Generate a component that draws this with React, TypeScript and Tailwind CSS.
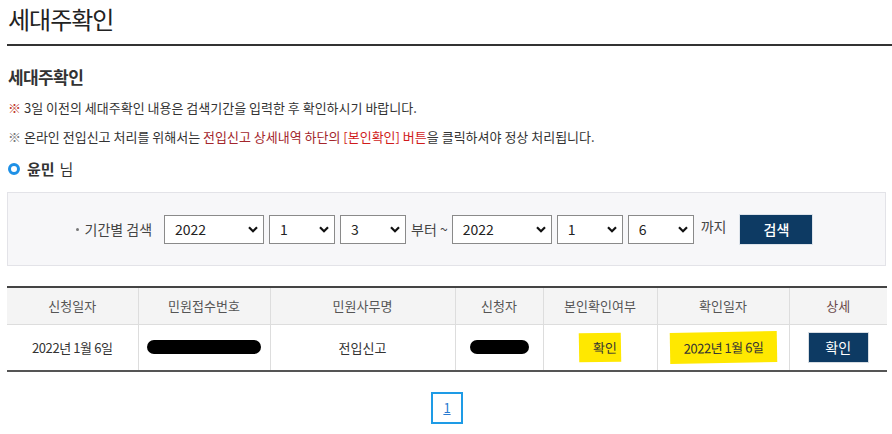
import React from "react";

const font = { fontFamily: '"Malgun Gothic", "Noto Sans CJK KR", "Noto Sans", sans-serif' };

function Select({ value, width }: { value: string; width: string }) {
  return (
    <div className={`relative h-[29px] ${width}`}>
      <select
        defaultValue={value}
        className="h-full w-full appearance-none border border-[#8a8a8a] bg-white pl-[10px] text-[14px] text-[#222] outline-none"
        style={font}
      >
        <option value={value}>{value}</option>
      </select>
      <svg
        className="pointer-events-none absolute right-[6px] top-[11px]"
        width="10"
        height="7"
        viewBox="0 0 10 7"
      >
        <path d="M1 1.2 L5 5.2 L9 1.2" fill="none" stroke="#111" strokeWidth="2.2" />
      </svg>
    </div>
  );
}

export default function App() {
  return (
    <div className="w-[892px] bg-white pl-[7px] text-[#333]" style={font}>
      <div className="h-[44px] pl-[1px] pt-[2px] text-[24px] leading-[34px] tracking-[-1px] text-[#222]">
        세대주확인
      </div>
      <div className="h-[2px] bg-[#333]" />
      <div className="mt-[19px] pl-[1px] text-[17px] font-bold leading-[24px] tracking-[-0.6px] text-[#333]">
        세대주확인
      </div>
      <div className="mt-[9px] pl-[1px] text-[13px] leading-[20px] text-[#333]">
        <span className="text-[#c0392b]">※</span> 3일 이전의 세대주확인 내용은 검색기간을 입력한 후 확인하시기 바랍니다.
      </div>
      <div className="mt-[9px] pl-[1px] text-[13px] leading-[20px] text-[#333]">
        <span className="text-[#777]">※</span> 온라인 전입신고 처리를 위해서는{" "}
        <span className="text-[#a3262c]">전입신고 상세내역 하단의 </span>
        <span className="text-[#d01b1b]">[본인확인] 버튼</span>을 클릭하셔야 정상 처리됩니다.
      </div>
      <div className="mt-[10px] flex h-[24px] items-center pl-[1px]">
        <span className="mr-[7px] inline-block h-[12px] w-[12px] rounded-full border-[3px] border-[#1e90e6]" />
        <span className="text-[15px] font-bold text-[#333]">윤민</span>
        <span className="ml-[5px] text-[15px] text-[#333]">님</span>
      </div>
      <div className="mr-[6px] mt-[11px] flex h-[74px] items-center justify-center border border-[#e3e3e8] bg-[#f7f7f9] pr-[4px]">
        <span className="mr-[12px] flex items-center text-[14px] text-[#444]">
          <span className="mr-[6px] inline-block h-[3px] w-[3px] rounded-full bg-[#777]" />
          기간별 검색
        </span>
        <div className="flex items-center gap-[5px]">
          <Select value="2022" width="w-[100px]" />
          <Select value="1" width="w-[66px]" />
          <Select value="3" width="w-[66px]" />
        </div>
        <span className="ml-[5px] mr-[4px] text-[14px] text-[#444]">부터 ~</span>
        <div className="flex items-center gap-[5px]">
          <Select value="2022" width="w-[100px]" />
          <Select value="1" width="w-[66px]" />
          <Select value="6" width="w-[66px]" />
        </div>
        <span className="mb-[6px] ml-[7px] text-[14px] text-[#444]">까지</span>
        <button className="ml-[13px] h-[31px] w-[74px] border border-[#dde3ea] bg-[#0d3a63] text-[14px] font-medium text-white">
          검색
        </button>
      </div>
      <table className="mt-[20px] w-[880px] table-fixed border-collapse text-center text-[13px]">
        <colgroup>
          <col className="w-[131px]" />
          <col className="w-[132px]" />
          <col className="w-[185px]" />
          <col className="w-[88px]" />
          <col className="w-[114px]" />
          <col className="w-[132px]" />
          <col className="w-[98px]" />
        </colgroup>
        <thead>
          <tr className="h-[37px] border-t-2 border-b border-t-[#444] border-b-[#ddd] bg-[#f4f4f4] text-[#555]">
            <th className="font-normal">신청일자</th>
            <th className="border-l border-[#ddd] font-normal">민원접수번호</th>
            <th className="border-l border-[#ddd] font-normal">민원사무명</th>
            <th className="border-l border-[#ddd] font-normal">신청자</th>
            <th className="border-l border-[#ddd] font-normal">본인확인여부</th>
            <th className="border-l border-[#ddd] font-normal">확인일자</th>
            <th className="border-l border-[#ddd] font-normal text-[#6b4a4a]">상세</th>
          </tr>
        </thead>
        <tbody>
          <tr className="h-[47px] border-b-2 border-b-[#555] text-[#333]">
            <td className="text-[13px] tracking-[-0.4px]">2022년 1월 6일</td>
            <td className="border-l border-[#ddd]">
              <span className="mx-auto block h-[14px] w-[114px] rounded-full bg-black" />
            </td>
            <td className="border-l border-[#ddd]">전입신고</td>
            <td className="border-l border-[#ddd]">
              <span className="mx-auto block h-[14px] w-[59px] rounded-full bg-black" />
            </td>
            <td className="border-l border-[#ddd]">
              <span className="inline-block h-[29px] w-[42px] -rotate-1 bg-[#ffe800] pl-[14px] text-left leading-[29px]">
                확인
              </span>
            </td>
            <td className="border-l border-[#ddd]">
              <span className="inline-block h-[31px] w-[107px] -rotate-1 bg-[#ffe800] text-[13px] leading-[31px] tracking-[-0.5px]">
                2022년 1월 6일
              </span>
            </td>
            <td className="border-l border-[#ddd]">
              <button className="h-[31px] w-[61px] border border-[#d7dde3] bg-[#0d3a63] text-[14px] text-white">
                확인
              </button>
            </td>
          </tr>
        </tbody>
      </table>
      <div className="flex h-[62px] justify-center pr-[5px] pt-[20px]">
        <span className="flex h-[32px] w-[32px] items-center justify-center border-2 border-[#1e9be6] text-[13px] text-[#2a7ad0] underline">
          1
        </span>
      </div>
    </div>
  );
}
